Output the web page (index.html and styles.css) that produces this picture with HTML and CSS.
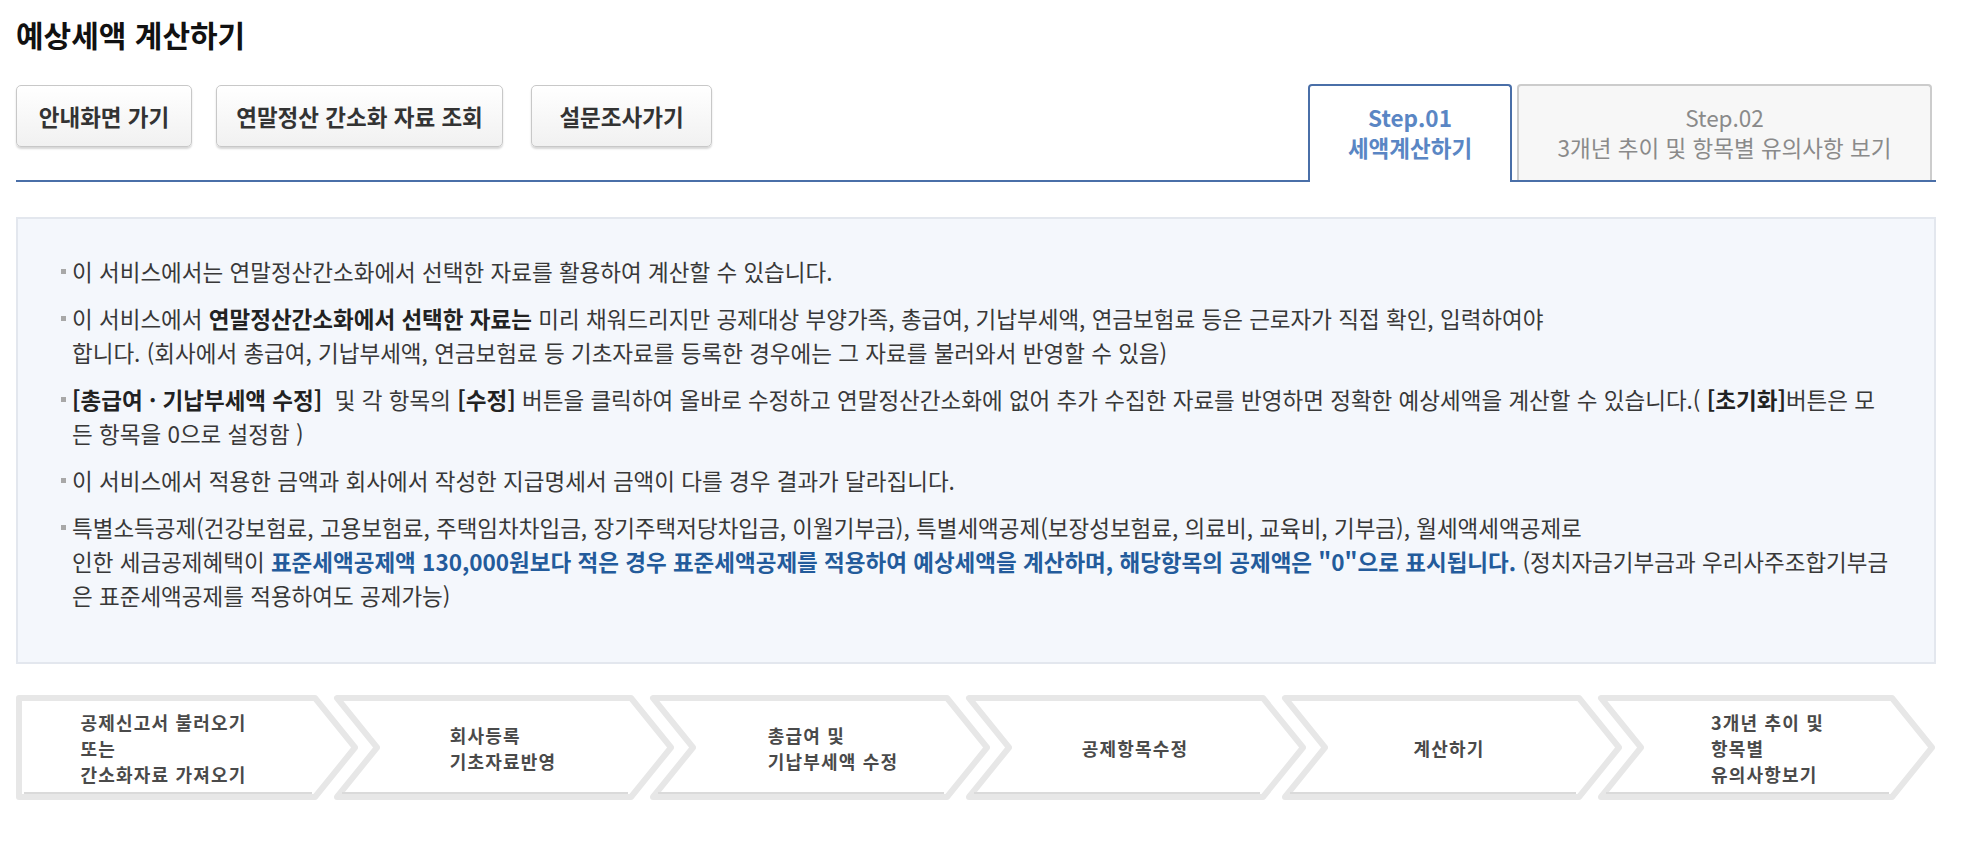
FILE: index.html
```html
<!DOCTYPE html>
<html lang="ko">
<head>
<meta charset="utf-8">
<title>예상세액 계산하기</title>
<link rel="stylesheet" href="styles.css">
</head>
<body>
<div class="page">
  <h1 class="title">예상세액 계산하기</h1>

  <div class="toolbar">
    <div class="btns">
      <button class="btn btn-guide" type="button">안내화면 가기</button>
      <button class="btn btn-lookup" type="button">연말정산 간소화 자료 조회</button>
      <button class="btn btn-survey" type="button">설문조사가기</button>
    </div>
    <div class="tabs">
      <div class="tab tab-on">
        <span class="tab-step">Step.01</span>
        <span class="tab-name">세액계산하기</span>
      </div>
      <div class="tab tab-off">
        <span class="tab-step">Step.02</span>
        <span class="tab-name">3개년 추이 및 항목별 유의사항 보기</span>
      </div>
    </div>
  </div>

  <div class="info">
    <ul class="notes">
      <li>이 서비스에서는 연말정산간소화에서 선택한 자료를 활용하여 계산할 수 있습니다.</li>
      <li>이 서비스에서 <b>연말정산간소화에서 선택한 자료는</b> 미리 채워드리지만 공제대상 부양가족, 총급여, 기납부세액, 연금보험료 등은 근로자가 직접 확인, 입력하여야<br>합니다. (회사에서 총급여, 기납부세액, 연금보험료 등 기초자료를 등록한 경우에는 그 자료를 불러와서 반영할 수 있음)</li>
      <li><b>[총급여 · 기납부세액 수정]</b>&nbsp; 및 각 항목의 <b>[수정]</b> 버튼을 클릭하여 올바로 수정하고 연말정산간소화에 없어 추가 수집한 자료를 반영하면 정확한 예상세액을 계산할 수 있습니다.( <b>[초기화]</b>버튼은 모<br>든 항목을 0으로 설정함 )</li>
      <li>이 서비스에서 적용한 금액과 회사에서 작성한 지급명세서 금액이 다를 경우 결과가 달라집니다.</li>
      <li>특별소득공제(건강보험료, 고용보험료, 주택임차차입금, 장기주택저당차입금, 이월기부금), 특별세액공제(보장성보험료, 의료비, 교육비, 기부금), 월세액세액공제로<br>인한 세금공제혜택이 <b class="blue">표준세액공제액 130,000원보다 적은 경우 표준세액공제를 적용하여 예상세액을 계산하며, 해당항목의 공제액은 "0"으로 표시됩니다.</b> (정치자금기부금과 우리사주조합기부금<br>은 표준세액공제를 적용하여도 공제가능)</li>
    </ul>
  </div>

  <div class="flow">
    <svg class="flow-bg" width="1920" height="105" viewBox="0 0 1920 105" aria-hidden="true">
      <g fill="#ffffff" stroke="#e7e7e7" stroke-width="6" stroke-linejoin="round">
        <polygon points="3,3 299,3 339,52.5 299,102 3,102"/>
        <polygon points="321,3 615,3 655,52.5 615,102 321,102 361,52.5"/>
        <polygon points="637,3 931,3 971,52.5 931,102 637,102 677,52.5"/>
        <polygon points="953,3 1247,3 1287,52.5 1247,102 953,102 993,52.5"/>
        <polygon points="1269,3 1563,3 1603,52.5 1563,102 1269,102 1309,52.5"/>
        <polygon points="1585,3 1876,3 1916,52.5 1876,102 1585,102 1625,52.5"/>
      </g>
      <g stroke="#dadada" stroke-width="2">
        <line x1="8" y1="98" x2="296" y2="98"/>
        <line x1="326" y1="98" x2="612" y2="98"/>
        <line x1="642" y1="98" x2="928" y2="98"/>
        <line x1="958" y1="98" x2="1244" y2="98"/>
        <line x1="1274" y1="98" x2="1560" y2="98"/>
        <line x1="1590" y1="98" x2="1873" y2="98"/>
      </g>
    </svg>
    <div class="flow-steps">
      <div class="flow-step flow-first"><p>공제신고서 불러오기<br>또는<br>간소화자료 가져오기</p></div>
      <div class="flow-step"><p>회사등록<br>기초자료반영</p></div>
      <div class="flow-step flow-shift-r"><p>총급여 및<br>기납부세액 수정</p></div>
      <div class="flow-step"><p>공제항목수정</p></div>
      <div class="flow-step flow-shift-l"><p>계산하기</p></div>
      <div class="flow-step"><p>3개년 추이 및<br>항목별<br>유의사항보기</p></div>
    </div>
  </div>
</div>
</body>
</html>
```

FILE: styles.css
```css
* {
  box-sizing: border-box;
}

html,
body {
  margin: 0;
  padding: 0;
  background: #ffffff;
}

body {
  font-family: "Noto Sans CJK KR", "Noto Sans", sans-serif;
  color: #333333;
}

.page {
  padding: 0 32px 0 16px;
}

.title {
  margin: 0;
  padding-top: 16px;
  font-size: 30px;
  line-height: 36px;
  font-weight: 700;
  color: #111111;
}

/* toolbar: buttons + step tabs */
.toolbar {
  display: flex;
  justify-content: space-between;
  align-items: flex-start;
  height: 98px;
  margin-top: 32px;
  border-bottom: 2px solid #4a6fa8;
}

.btns {
  display: flex;
  gap: 24px;
  margin-top: 1px;
}

.btn {
  height: 62px;
  padding: 0;
  font-family: inherit;
  font-size: 22.5px;
  font-weight: 700;
  color: #333333;
  background: linear-gradient(#ffffff, #f1f1f1);
  border: 1px solid #c8c8c8;
  border-radius: 5px;
  box-shadow: 0 2px 2px rgba(0, 0, 0, 0.16);
}

.btn-guide {
  width: 176px;
}

.btn-lookup {
  width: 287px;
}

.btn-survey {
  width: 181px;
  margin-left: 4px;
}

.tabs {
  display: flex;
  gap: 5px;
  margin-right: 4px;
}

.tab {
  display: flex;
  flex-direction: column;
  align-items: center;
  padding-top: 16px;
  font-size: 22.5px;
  line-height: 30px;
  border-radius: 4px 4px 0 0;
}

.tab-on {
  width: 204px;
  height: 98px;
  background: #ffffff;
  border: 2px solid #4a6fa8;
  border-bottom: none;
  color: #5a86c4;
  font-weight: 700;
}

.tab-off {
  width: 415px;
  height: 96px;
  background: #f7f7f7;
  border: 2px solid #cccccc;
  border-bottom: none;
  color: #8a8a8a;
}

/* info box */
.info {
  margin-top: 35px;
  padding: 35px 30px 50px 0;
  background: #f4f7fc;
  border: 2px solid #e3e7ee;
}

.notes {
  list-style: none;
  margin: 0;
  padding: 0;
}

.notes li {
  position: relative;
  padding-left: 54px;
  font-size: 22.5px;
  line-height: 34px;
  white-space: nowrap;
  color: #383838;
}

.notes li + li {
  margin-top: 13px;
}

.notes li::before {
  content: "";
  position: absolute;
  left: 43px;
  top: 15px;
  width: 5px;
  height: 5px;
  background: #a8a8a8;
}

.notes b {
  color: #222222;
}

.notes b.blue {
  color: #235b9b;
}

/* process flow */
.flow {
  position: relative;
  margin-top: 31px;
  width: 1920px;
  height: 105px;
}

.flow-bg {
  position: absolute;
  left: 0;
  top: 0;
}

.flow-steps {
  position: relative;
  display: grid;
  grid-template-columns: 339px repeat(4, 316px) 317px;
  height: 105px;
}

.flow-step {
  display: flex;
  align-items: center;
  justify-content: center;
  padding: 0 40px 0 20px;
}

.flow-first {
  padding: 0 44px 0 0;
}

.flow-shift-r {
  padding: 0 26px 0 34px;
}

.flow-shift-l {
  padding: 0 42px 0 18px;
}

.flow-step p {
  margin: 0;
  font-size: 18px;
  line-height: 26px;
  font-weight: 700;
  letter-spacing: 1.2px;
  color: #4a4a4a;
}
```
